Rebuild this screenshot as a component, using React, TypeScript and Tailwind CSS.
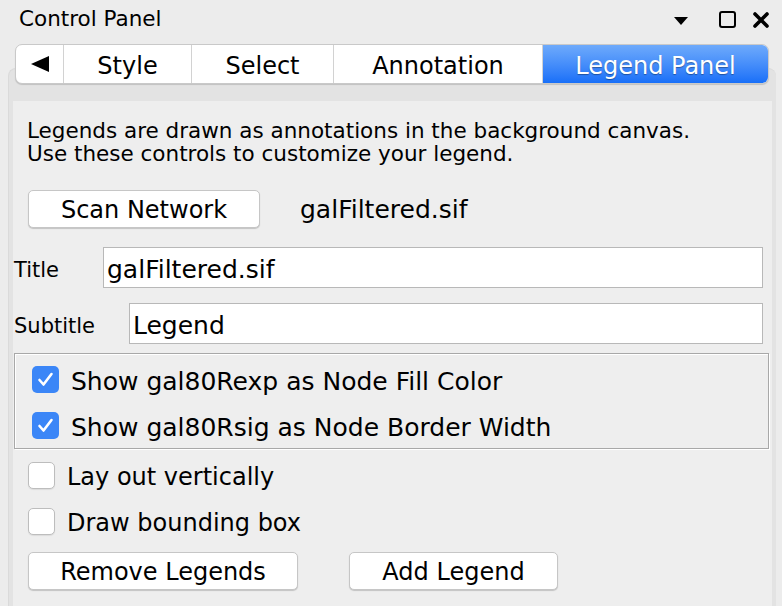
import React from 'react'

const tabs = [
  { label: 'Style', w: 'w-[128px]' },
  { label: 'Select', w: 'w-[142px]' },
  { label: 'Annotation', w: 'w-[209px]' },
]

const Check: React.FC<{ checked?: boolean }> = ({ checked }) =>
  checked ? (
    <div className="w-[27px] h-[27px] rounded-[5px] bg-[#3b86f7] flex items-center justify-center shrink-0">
      <svg width="27" height="27" viewBox="0 0 27 27">
        <path d="M7.5 14 L11.5 18.5 L19.5 8" fill="none" stroke="#fff" strokeWidth="2.6" strokeLinecap="round" strokeLinejoin="round" />
      </svg>
    </div>
  ) : (
    <div className="w-[27px] h-[27px] rounded-[5px] bg-white border border-[#bdbdbd] shadow-[0_1px_1px_rgba(0,0,0,0.08)] shrink-0" />
  )

const Button: React.FC<{ label: string; w: string }> = ({ label, w }) => (
  <div
    className={`${w} h-[38px] bg-white border border-[#c6c6c6] rounded-[5px] shadow-[0_1px_1px_rgba(0,0,0,0.18)] flex items-center justify-center pt-[2px] text-[24px] leading-[30px] text-black`}
  >
    {label}
  </div>
)

export default function App() {
  return (
    <div
      className="w-[782px] h-[606px] overflow-hidden bg-[#ececec] text-black flex flex-col"
      style={{ fontFamily: '"DejaVu Sans", "Liberation Sans", sans-serif' }}
    >
      {/* header */}
      <div className="h-[44px] shrink-0 flex items-start justify-between pl-[19px] pr-[13px]">
        <div className="pt-[7px] text-[21.5px] leading-[24px]">Control Panel</div>
        <div className="flex items-center pt-[10px] h-[28px]">
          <svg width="14" height="8" viewBox="0 0 14 8" className="mt-[3px]">
            <path d="M0 0 H14 L7 8 Z" fill="#000" />
          </svg>
          <div className="ml-[31px] w-[17px] h-[17px] border-2 border-black rounded-[3px]" />
          <svg width="16" height="16" viewBox="0 0 16 16" className="ml-[17px] mt-[2px]">
            <path d="M2 2 L14 14 M14 2 L2 14" stroke="#000" strokeWidth="3.6" strokeLinecap="round" />
          </svg>
        </div>
      </div>

      {/* tab bar */}
      <div className="relative z-10 pl-[15px] shrink-0">
        <div className="w-[754px] h-[40px] flex bg-white border border-[#c9c9c9] rounded-[7px] shadow-[0_1px_1px_rgba(0,0,0,0.15)] overflow-hidden text-[24px] leading-[30px]">
          <div className="w-[48px] flex items-center justify-center border-r border-[#d2d2d2]">
            <svg width="18" height="16" viewBox="0 0 18 16">
              <path d="M0 8 L18 0 V16 Z" fill="#000" />
            </svg>
          </div>
          {tabs.map(t => (
            <div key={t.label} className={`${t.w} flex items-center justify-center pt-[4px] border-r border-[#d2d2d2]`}>
              {t.label}
            </div>
          ))}
          <div className="flex-1 flex items-center justify-center pt-[4px] text-white bg-gradient-to-b from-[#6eaafb] to-[#176ff8] [text-shadow:0_1px_1px_rgba(0,0,0,0.35)]">
            Legend Panel
          </div>
        </div>
      </div>

      {/* tabbed container */}
      <div className="-mt-[16px] ml-[8px] w-[768px] flex-1 bg-[#e3e3e3] border-t border-l border-[#dadada] rounded-t-[8px] pt-[32px] pl-[4px] pr-[4px] flex flex-col">
        <div className="flex-1 bg-[#eeeeee] flex flex-col">
          <div className="pl-[14px] pt-[18px] text-[21.5px] leading-[23px]">
            <div>Legends are drawn as annotations in the background canvas.</div>
            <div>Use these controls to customize your legend.</div>
          </div>

          <div className="mt-[25px] pl-[15px] flex items-center">
            <Button label="Scan Network" w="w-[232px]" />
            <div className="ml-[40px] pt-[2px] text-[25px] leading-[30px]">galFiltered.sif</div>
          </div>

          <div className="mt-[19px] pl-[1px] pr-[9px] flex items-center">
            <div className="w-[89px] pt-[4px] text-[21px] leading-[26px]">Title</div>
            <div className="flex-1 h-[41px] bg-white border border-[#b8b8b8] flex items-center pl-[3px] pt-[4px] text-[25px] leading-[30px]">
              galFiltered.sif
            </div>
          </div>

          <div className="mt-[15px] pl-[1px] pr-[9px] flex items-center">
            <div className="w-[115px] pt-[4px] text-[21px] leading-[26px]">Subtitle</div>
            <div className="flex-1 h-[41px] bg-white border border-[#b8b8b8] flex items-center pl-[3px] pt-[4px] text-[25px] leading-[30px]">
              Legend
            </div>
          </div>

          <div className="mt-[9px] ml-[1px] mr-[3px] border border-[#a8a8a8] shadow-[inset_1px_1px_0_#ffffff,1px_1px_0_#ffffff] pt-[2px] pl-[17px] text-[25px] leading-[30px]">
            <div className="h-[46px] flex items-center gap-[12px]">
              <Check checked />
              <span className="pt-[5px]">Show gal80Rexp as Node Fill Color</span>
            </div>
            <div className="h-[46px] flex items-center gap-[12px]">
              <Check checked />
              <span className="pt-[5px]">Show gal80Rsig as Node Border Width</span>
            </div>
          </div>

          <div className="mt-[3px] pl-[15px] text-[24px] leading-[30px]">
            <div className="h-[46px] flex items-center gap-[12px]">
              <Check />
              <span className="pt-[4px]">Lay out vertically</span>
            </div>
            <div className="h-[46px] flex items-center gap-[12px]">
              <Check />
              <span className="pt-[4px]">Draw bounding box</span>
            </div>
          </div>

          <div className="mt-[8px] pl-[15px] flex gap-[51px]">
            <Button label="Remove Legends" w="w-[270px]" />
            <Button label="Add Legend" w="w-[209px]" />
          </div>
        </div>
      </div>
    </div>
  )
}
